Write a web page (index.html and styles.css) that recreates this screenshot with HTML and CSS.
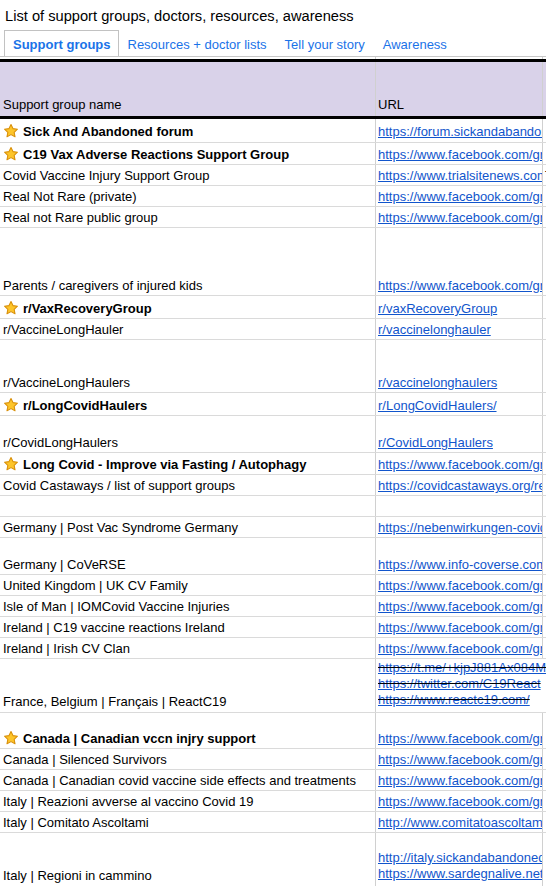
FILE: index.html
```html
<!DOCTYPE html>
<html lang="en">
<head>
<meta charset="utf-8">
<title>List of support groups, doctors, resources, awareness</title>
<link rel="stylesheet" href="styles.css">
</head>
<body>
<div class="title">List of support groups, doctors, resources, awareness</div>
<nav class="tabs">
  <a class="tab active">Support groups</a>
  <a class="tab">Resources + doctor lists</a>
  <a class="tab">Tell your story</a>
  <a class="tab">Awareness</a>
</nav>
<div class="sheet">
  <div class="row spacer"><div class="c1"></div><div class="c2"></div><div class="c3"></div></div>
  <div class="row hdr"><div class="c1">Support group name</div><div class="c2">URL</div><div class="c3"></div></div>

  <div class="row h24 first"><div class="c1 b"><svg class="star" viewBox="0 0 24 24"><path d="M12 2.2l2.95 6.2 6.75.85-4.95 4.7 1.3 6.75L12 17.4l-6.05 3.3 1.3-6.75-4.95-4.7 6.75-.85z"/></svg>Sick And Abandoned forum</div><div class="c2"><a href="#">https://forum.sickandabandoned.com/</a></div><div class="c3"></div></div>
  <div class="row h22"><div class="c1 b"><svg class="star" viewBox="0 0 24 24"><path d="M12 2.2l2.95 6.2 6.75.85-4.95 4.7 1.3 6.75L12 17.4l-6.05 3.3 1.3-6.75-4.95-4.7 6.75-.85z"/></svg>C19 Vax Adverse Reactions Support Group</div><div class="c2"><a href="#">https://www.facebook.com/groups/c19vaxreactions</a></div><div class="c3"></div></div>
  <div class="row"><div class="c1">Covid Vaccine Injury Support Group</div><div class="c2"><a href="#">https://www.trialsitenews.com/covid-vaccine-injury</a></div><div class="c3">The</div></div>
  <div class="row"><div class="c1">Real Not Rare (private)</div><div class="c2"><a href="#">https://www.facebook.com/groups/realnotrare</a></div><div class="c3"></div></div>
  <div class="row"><div class="c1">Real not Rare public group</div><div class="c2"><a href="#">https://www.facebook.com/groups/realnotrarepublic</a></div><div class="c3"></div></div>
  <div class="row h68"><div class="c1">Parents / caregivers of injured kids</div><div class="c2"><a href="#">https://www.facebook.com/groups/parents</a></div><div class="c3"></div></div>
  <div class="row h23"><div class="c1 b"><svg class="star" viewBox="0 0 24 24"><path d="M12 2.2l2.95 6.2 6.75.85-4.95 4.7 1.3 6.75L12 17.4l-6.05 3.3 1.3-6.75-4.95-4.7 6.75-.85z"/></svg>r/VaxRecoveryGroup</div><div class="c2"><a href="#">r/vaxRecoveryGroup</a></div><div class="c3"></div></div>
  <div class="row"><div class="c1">r/VaccineLongHauler</div><div class="c2"><a href="#">r/vaccinelonghauler</a></div><div class="c3"></div></div>
  <div class="row h53"><div class="c1">r/VaccineLongHaulers</div><div class="c2"><a href="#">r/vaccinelonghaulers</a></div><div class="c3"></div></div>
  <div class="row h23"><div class="c1 b"><svg class="star" viewBox="0 0 24 24"><path d="M12 2.2l2.95 6.2 6.75.85-4.95 4.7 1.3 6.75L12 17.4l-6.05 3.3 1.3-6.75-4.95-4.7 6.75-.85z"/></svg>r/LongCovidHaulers</div><div class="c2"><a href="#">r/LongCovidHaulers/</a></div><div class="c3"></div></div>
  <div class="row h37"><div class="c1">r/CovidLongHaulers</div><div class="c2"><a href="#">r/CovidLongHaulers</a></div><div class="c3"></div></div>
  <div class="row h22"><div class="c1 b"><svg class="star" viewBox="0 0 24 24"><path d="M12 2.2l2.95 6.2 6.75.85-4.95 4.7 1.3 6.75L12 17.4l-6.05 3.3 1.3-6.75-4.95-4.7 6.75-.85z"/></svg>Long Covid - Improve via Fasting / Autophagy</div><div class="c2"><a href="#">https://www.facebook.com/groups/longcovidfasting</a></div><div class="c3"></div></div>
  <div class="row"><div class="c1">Covid Castaways / list of support groups</div><div class="c2"><a href="#">https://covidcastaways.org/resources</a></div><div class="c3"></div></div>
  <div class="row"><div class="c1"></div><div class="c2"></div><div class="c3"></div></div>
  <div class="row"><div class="c1">Germany | Post Vac Syndrome Germany</div><div class="c2"><a href="#">https://nebenwirkungen-covid-impfung.de</a></div><div class="c3"></div></div>
  <div class="row h37"><div class="c1">Germany | CoVeRSE</div><div class="c2"><a href="#">https://www.info-coverse.com/</a></div><div class="c3"></div></div>
  <div class="row"><div class="c1">United Kingdom | UK CV Family</div><div class="c2"><a href="#">https://www.facebook.com/groups/ukcvfamily</a></div><div class="c3"></div></div>
  <div class="row"><div class="c1">Isle of Man | IOMCovid Vaccine Injuries</div><div class="c2"><a href="#">https://www.facebook.com/groups/iomcovid</a></div><div class="c3"></div></div>
  <div class="row"><div class="c1">Ireland | C19 vaccine reactions Ireland</div><div class="c2"><a href="#">https://www.facebook.com/groups/c19ireland</a></div><div class="c3"></div></div>
  <div class="row"><div class="c1">Ireland | Irish CV Clan</div><div class="c2"><a href="#">https://www.facebook.com/groups/irishcvclan</a></div><div class="c3"></div></div>
  <div class="row h54"><div class="c1 ml">France, Belgium | Français | ReactC19</div><div class="c2 span"><div class="lines strike"><a href="#">https://t.me/+kjpJ881Ax084MzE0</a><a href="#">https://twitter.com/C19React</a><a href="#">https://www.reactc19.com/</a></div></div></div>
  <div class="row h36"><div class="c1 b"><svg class="star" viewBox="0 0 24 24"><path d="M12 2.2l2.95 6.2 6.75.85-4.95 4.7 1.3 6.75L12 17.4l-6.05 3.3 1.3-6.75-4.95-4.7 6.75-.85z"/></svg>Canada | Canadian vccn injry support</div><div class="c2"><a href="#">https://www.facebook.com/groups/canadianvccninjry</a></div><div class="c3"></div></div>
  <div class="row"><div class="c1">Canada | Silenced Survivors</div><div class="c2"><a href="#">https://www.facebook.com/groups/silencedsurvivors</a></div><div class="c3"></div></div>
  <div class="row"><div class="c1">Canada | Canadian covid vaccine side effects and treatments</div><div class="c2"><a href="#">https://www.facebook.com/groups/canadiancovid</a></div><div class="c3"></div></div>
  <div class="row"><div class="c1">Italy | Reazioni avverse al vaccino Covid 19</div><div class="c2"><a href="#">https://www.facebook.com/groups/reazioniavverse</a></div><div class="c3"></div></div>
  <div class="row"><div class="c1">Italy | Comitato Ascoltami</div><div class="c2"><a href="#">http://www.comitatoascoltami.it</a></div><div class="c3"></div></div>
  <div class="row h54"><div class="c1 ml">Italy | Regioni in cammino</div><div class="c2"><div class="lines"><a href="#">http://italy.sickandabandoned.com</a><a href="#">https://www.sardegnalive.net/it/regioni</a></div></div><div class="c3"></div></div>
</div>
</body>
</html>
```

FILE: styles.css
```css
html {
  overflow: hidden;
}

body {
  margin: 0;
  background: #fff;
  color: #000;
  font-family: "Liberation Sans", Arial, sans-serif;
}

.title {
  height: 22px;
  padding: 8px 0 0 5px;
  font-size: 14.67px;
  line-height: 17px;
}

.tabs {
  display: flex;
  height: 26px;
  padding-left: 4px;
  border-bottom: 1px solid #c8c8c8;
}

.tab {
  padding: 2px 8px 0;
  border: 1px solid transparent;
  border-bottom: 0;
  font-size: 13px;
  line-height: 23px;
  color: #1a73e8;
  text-decoration: none;
  white-space: nowrap;
  cursor: pointer;
}

.tab.active {
  padding-right: 7px;
  border-color: #c2c2c2;
  background: #fff;
  font-weight: bold;
}

.sheet {
  font-size: 13px;
  line-height: 15px;
}

.row {
  display: flex;
  box-sizing: border-box;
  height: 21px;
  border-bottom: 1px solid #dadada;
}

.row.spacer {
  height: 2px;
  border-bottom: 0;
}

.row.hdr {
  height: 60px;
  border-top: 3px solid #000;
  border-bottom: 3px solid #000;
  background: #d9d2e9;
}

.row.hdr > div {
  padding-bottom: 4px;
}

.row.first > div {
  padding-bottom: 3px;
}

.h22 { height: 22px; }
.h23 { height: 23px; }
.h24 { height: 24px; }
.h36 { height: 36px; }
.h37 { height: 37px; }
.h53 { height: 53px; }
.h54 { height: 54px; }
.h68 { height: 68px; }

.c1,
.c2,
.c3 {
  display: flex;
  align-items: flex-end;
  box-sizing: border-box;
  padding: 0 3px 2px;
  overflow: hidden;
  white-space: nowrap;
}

.c1 {
  flex: none;
  width: 376px;
  border-right: 1px solid #d0d0d0;
}

.c2 {
  flex: none;
  width: 167px;
  padding-left: 2px;
  border-right: 1px solid #d0d0d0;
}

.c2.span {
  flex: 1;
  width: auto;
  border-right: 0;
}

.c3 {
  flex: 1;
  min-width: 0;
  padding-left: 2px;
}

.b {
  font-weight: bold;
}

.ml {
  padding-bottom: 3px;
}

.star {
  flex: none;
  width: 16px;
  height: 16px;
  margin: 0 4px 0 0;
  fill: #fdc52a;
  stroke: #d9900b;
  stroke-width: 1.6;
  stroke-linejoin: round;
}

a {
  color: #1155cc;
  text-decoration: underline;
}

.lines {
  display: flex;
  flex-direction: column;
  padding-bottom: 2px;
  line-height: 16px;
}

.lines a {
  display: block;
}

.strike {
  color: #000;
  text-decoration: line-through;
}
```
